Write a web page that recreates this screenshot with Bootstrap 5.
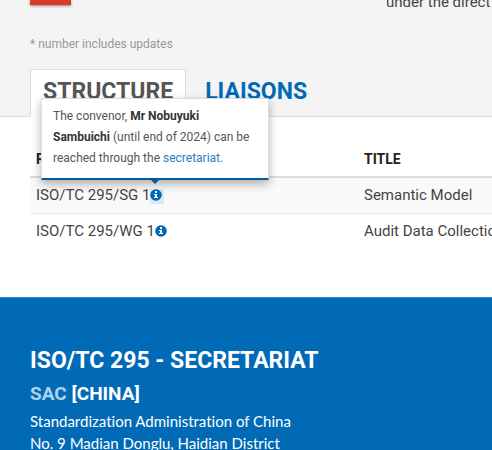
<!DOCTYPE html>
<html lang="en">
<head>
<meta charset="utf-8">
<meta name="viewport" content="width=device-width, initial-scale=1">
<title>ISO/TC 295 - Structure</title>
<link rel="stylesheet" href="https://cdn.jsdelivr.net/npm/bootstrap@5.3.0/dist/css/bootstrap.min.css">
<style>
body { font-family: Roboto, "Open Sans", sans-serif; font-size: 15px; line-height: 22px; color: #444; overflow-x: hidden; }
a { text-decoration: none; }
.page-gutter { padding-left: 30px; }
.intro { background: #f4f4f4; border-bottom: 1px solid #ddd; }
.intro-top { height: 12px; }
.red-tile { width: 41px; height: 5px; background: #d73a2b; box-shadow: 0 1px 3px rgba(0,0,0,.45); }
.intro-text { margin-left: 315px; margin-top: -9px; }
.footnote { font-size: 12px; line-height: 18px; color: #999; margin-top: 23px; margin-bottom: 16px; }
.section-tabs { --bs-nav-tabs-border-width: 0; border: 0; margin-bottom: -1px; }
.section-tabs .nav-link { font-size: 23px; line-height: 28px; font-weight: 700; padding: 8px 12px 10px; margin: 0; border: 1px solid transparent; border-radius: 0; color: #006ab7; }
.section-tabs .nav-link.active { color: #555; background: #fff; border-color: #ddd #ddd #fff; }
.section-tabs .nav-item + .nav-item { margin-left: 6px; }
.groups { --bs-table-striped-bg: #f9f9f9; --bs-table-striped-color: #444; --bs-table-color: #444; table-layout: fixed; margin: 25px 0 48px; white-space: nowrap; }
.groups > :not(caption) > * > * { padding: 6px; border: 0; }
.groups > thead > tr > th { color: #222; font-size: 14px; border-bottom: 2px solid #ddd; }
.groups > tbody > tr > td { padding-bottom: 7px; border-bottom: 1px solid #e6e6e6; }
.groups > tbody > tr:last-child > td { border-bottom: 0; }
.groups .col-ref { width: 328px; }
.info-btn { width: 14px; height: 15px; padding: 0 2px 3px 0; border: 0; background: transparent; display: inline-flex; vertical-align: -1px; }
.info-btn svg { flex: none; }
.info-btn[aria-expanded="true"] { background: #dce8f2; }
.info-tip { left: 11px; bottom: 33px; width: 228px; padding: 7px 11px 9px; background: #fff; border: 1px solid #ddd; border-bottom: 2px solid #005a9c; box-shadow: 0 4px 9px rgba(0,0,0,.3); font-size: 12px; line-height: 21px; color: #555; white-space: normal; z-index: 5; }
.info-tip strong { color: #333; }
.info-tip a { color: #1c7fc7; }
.info-tip::after { content: ""; position: absolute; left: 107px; top: 100%; border: 6px solid transparent; border-top-color: #005a9c; border-bottom: 0; }
.secretariat { background: #006ab7; color: #fff; border-top: 1px solid #2b83c4; padding-top: 48px; padding-bottom: 30px; }
.secretariat h2, .secretariat h3 { font-weight: 700; margin-bottom: 6px; }
.secretariat h2 { font-size: 23px; line-height: 30px; }
.secretariat h3 { font-size: 19px; line-height: 24px; margin-bottom: 4px; }
.secretariat h3 a { color: #b1d2ea; }
.secretariat address { font-family: Lato, Roboto, sans-serif; font-variant-ligatures: none; line-height: 22px; }
</style>
<script src="https://cdn.jsdelivr.net/npm/bootstrap@5.3.0/dist/js/bootstrap.bundle.min.js"></script>
</head>
<body>
<header class="intro page-gutter">
  <div class="intro-top d-flex align-items-start">
    <div class="red-tile"></div>
    <div class="intro-text text-nowrap">under the direct</div>
  </div>
  <p class="footnote">* number includes updates</p>
  <ul class="nav nav-tabs section-tabs flex-nowrap">
    <li class="nav-item"><a class="nav-link active" href="#structure" aria-current="page">STRUCTURE</a></li>
    <li class="nav-item"><a class="nav-link" href="#liaisons">LIAISONS</a></li>
  </ul>
</header>
<main id="structure" class="page-gutter">
  <table class="table table-striped groups">
    <thead><tr><th class="col-ref" scope="col">REFERENCE</th><th scope="col">TITLE</th></tr></thead>
    <tbody>
      <tr>
        <td class="position-relative">ISO/TC 295/SG 1<button class="info-btn" type="button" aria-label="Convenor information" aria-expanded="true" aria-describedby="tip"><svg width="12" height="12" viewBox="0 0 12 12"><circle cx="6" cy="6" r="5.8" fill="#006ab7"/><path d="M5 2h2v2H5zM4 5h3v3h1v1H4V8h1V6H4z" fill="#fff"/></svg></button>
          <div id="tip" class="info-tip position-absolute" role="tooltip">The convenor, <strong>Mr Nobuyuki Sambuichi</strong> (until end of 2024) can be reached through the <a href="#secretariat">secretariat</a>.</div>
        </td>
        <td>Semantic Model</td>
      </tr>
      <tr>
        <td>ISO/TC 295/WG 1<button class="info-btn" type="button" aria-label="Convenor information" aria-expanded="false"><svg width="12" height="12" viewBox="0 0 12 12"><circle cx="6" cy="6" r="5.8" fill="#006ab7"/><path d="M5 2h2v2H5zM4 5h3v3h1v1H4V8h1V6H4z" fill="#fff"/></svg></button></td>
        <td>Audit Data Collection</td>
      </tr>
    </tbody>
  </table>
</main>
<section id="secretariat" class="secretariat page-gutter">
  <h2>ISO/TC 295 - SECRETARIAT</h2>
  <h3><a href="#sac">SAC</a> [CHINA]</h3>
  <address>Standardization Administration of China<br>No. 9 Madian Donglu, Haidian District</address>
</section>
</body>
</html>
